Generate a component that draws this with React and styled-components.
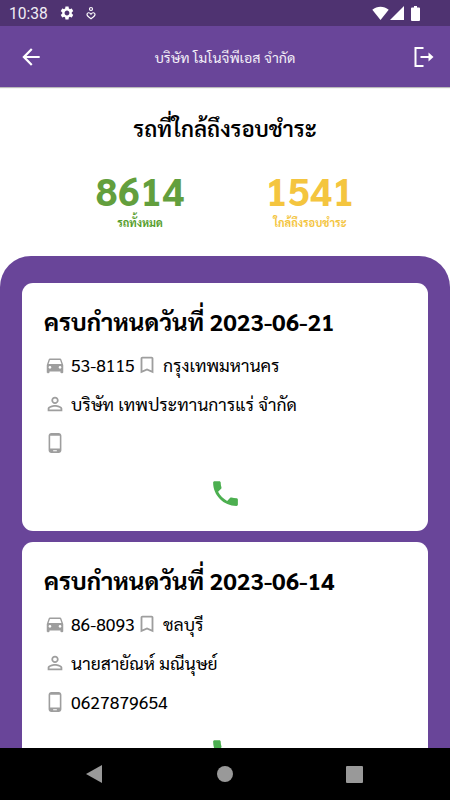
import React from "react";
import styled, { createGlobalStyle } from "styled-components";

const Global = createGlobalStyle`
  *{box-sizing:border-box}
  body{margin:0;background:#fff;overflow:hidden}
`;
const Screen = styled.div`
  width:450px;height:800px;display:flex;flex-direction:column;overflow:hidden;
  font-family:Sarabun,"Noto Sans Thai Looped",sans-serif;color:#000;background:#fff;
`;
const StatusBar = styled.div`
  height:26px;flex:none;background:#4f3371;color:#f1edf5;display:flex;align-items:center;
  padding:0 30px 0 9px;
`;
const Clock = styled.span`font:400 15.6px/24px Roboto,sans-serif;width:50px;padding-top:2px;`;
const Icon = styled.svg`
  display:block;flex:none;width:${p => p.$w}px;height:${p => p.$h || p.$w}px;
  margin-left:${p => p.$ml || 0}px;fill:${p => p.$c || "#fff"};
`;
const Spacer = styled.div`flex:1;`;
const AppBar = styled.header`
  height:61px;flex:none;background:#694599;display:grid;grid-template-columns:26px 1fr 26px;align-items:center;
  justify-items:center;padding:0 14px 0 18px;color:#f4f0f8;box-shadow:0 1px 1px #0004;
`;
const BarTitle = styled.h1`margin:0;font-size:14.2px;font-weight:400;line-height:30px;padding-right:4px;`;
const Line = styled.div`
  font-size:${p => p.$size}px;font-weight:${p => p.$weight || 400};
  line-height:${p => p.$lh}px;height:${p => p.$lh}px;white-space:nowrap;color:${p => p.$c || "inherit"};
`;
const Summary = styled.section`
  height:169px;flex:none;display:flex;flex-direction:column;align-items:center;padding-top:25px;
`;
const Stats = styled.div`
  display:grid;grid-template-columns:170px 170px;width:340px;margin-top:22px;
`;
const Stat = styled.div`display:flex;flex-direction:column;align-items:center;`;
const Panel = styled.main`
  flex:1;min-height:0;overflow:hidden;background:#694599;border-radius:31px 31px 0 0;
  padding:27px 22px 0;display:flex;flex-direction:column;gap:11px;
`;
const Card = styled.article`
  height:248px;flex:none;background:#fff;border-radius:11px;padding:18px 22px 0;
  display:flex;flex-direction:column;
`;
const Rows = styled.div`display:flex;flex-direction:column;margin-top:4px;`;
const Row = styled.div`height:39px;display:flex;align-items:center;`;
const Glyph = styled.div`width:27px;flex:none;display:flex;`;
const Plate = styled.div`width:65px;`;
const Call = styled.div`display:flex;justify-content:center;margin-top:15px;`;
const NavBar = styled.nav`
  height:52px;flex:none;background:#000;display:grid;grid-template-columns:130px 130px 130px;
  justify-content:center;align-items:center;justify-items:center;
`;

const paths = {
  car: "M18.92 6.01C18.72 5.42 18.16 5 17.5 5h-11c-.66 0-1.21.42-1.42 1.01L3 12v8c0 .55.45 1 1 1h1c.55 0 1-.45 1-1v-1h12v1c0 .55.45 1 1 1h1c.55 0 1-.45 1-1v-8l-2.08-5.99zM6.5 16c-.83 0-1.5-.67-1.5-1.5S5.67 13 6.5 13s1.5.67 1.5 1.5S7.33 16 6.5 16zm11 0c-.83 0-1.5-.67-1.5-1.5s.67-1.5 1.5-1.5 1.5.67 1.5 1.5-.67 1.5-1.5 1.5zM5 11l1.5-4.5h11L19 11H5z",
  bookmark: "M17 3H7c-1.1 0-1.99.9-1.99 2L5 21l7-3 7 3V5c0-1.1-.9-2-2-2zm0 15-5-2.18L7 18V5h10v13z",
  person: "M12 5.9a2.1 2.1 0 1 1 0 4.2 2.1 2.1 0 0 1 0-4.2m0 9c2.97 0 6.1 1.46 6.1 2.1v1.1H5.9V17c0-.64 3.13-2.1 6.1-2.1M12 4C9.79 4 8 5.79 8 8s1.79 4 4 4 4-1.79 4-4-1.79-4-4-4zm0 9c-2.67 0-8 1.34-8 4v3h16v-3c0-2.66-5.33-4-8-4z",
  mobile: "M16 1H8C6.34 1 5 2.34 5 4v16c0 1.66 1.34 3 3 3h8c1.66 0 3-1.34 3-3V4c0-1.66-1.34-3-3-3zm-2 20h-4v-1h4v1zm3.25-3H6.75V4h10.5v14z",
  phone: "M6.62 10.79c1.44 2.83 3.76 5.14 6.59 6.59l2.2-2.2c.27-.27.67-.36 1.02-.24 1.12.37 2.33.57 3.57.57.55 0 1 .45 1 1V20c0 .55-.45 1-1 1-9.39 0-17-7.61-17-17 0-.55.45-1 1-1h3.5c.55 0 1 .45 1 1 0 1.25.2 2.45.57 3.57.11.35.03.74-.25 1.02l-2.2 2.2z",
  back: "M20 11H7.83l5.59-5.59L12 4l-8 8 8 8 1.41-1.41L7.83 13H20v-2z",
  gear: "M19.14 12.94c.04-.3.06-.61.06-.94 0-.32-.02-.64-.07-.94l2.03-1.58c.18-.14.23-.41.12-.61l-1.92-3.32c-.12-.22-.37-.29-.59-.22l-2.39.96c-.5-.38-1.03-.7-1.62-.94l-.36-2.54c-.04-.24-.24-.41-.48-.41h-3.84c-.24 0-.43.17-.47.41l-.36 2.54c-.59.24-1.13.57-1.62.94l-2.39-.96c-.22-.08-.47 0-.59.22L2.74 8.87c-.12.21-.08.47.12.61l2.03 1.58c-.05.3-.09.63-.09.94s.02.64.07.94l-2.03 1.58c-.18.14-.23.41-.12.61l1.92 3.32c.12.22.37.29.59.22l2.39-.96c.5.38 1.03.7 1.62.94l.36 2.54c.05.24.24.41.48.41h3.84c.24 0 .44-.17.47-.41l.36-2.54c.59-.24 1.13-.56 1.62-.94l2.39.96c.22.08.47 0 .59-.22l1.92-3.32c.12-.22.07-.47-.12-.61l-2.01-1.58zM12 15.6c-1.98 0-3.6-1.62-3.6-3.6s1.62-3.6 3.6-3.6 3.6 1.62 3.6 3.6-1.62 3.6-3.6 3.6z",
};
const Pic = ({ name, w = 22, c = "#9e9e9e" }) => (
  <Icon viewBox="0 0 24 24" $w={w} $c={c}><path d={paths[name]} /></Icon>
);

const cars = [
  { date: "2023-06-21", plate: "53-8115", city: "กรุงเทพมหานคร", owner: "บริษัท เทพประทานการแร่ จำกัด", tel: "" },
  { date: "2023-06-14", plate: "86-8093", city: "ชลบุรี", owner: "นายสายัณห์ มณีนุษย์", tel: "0627879654" },
];

const CarCard = ({ car }) => (
  <Card>
    <Line $size={24.05} $weight={700} $lh={40}>ครบกำหนดวันที่ {car.date}</Line>
    <Rows>
      <Row>
        <Glyph><Pic name="car" /></Glyph>
        <Plate><Line $size={17.5} $lh={30}>{car.plate}</Line></Plate>
        <Glyph><Pic name="bookmark" /></Glyph>
        <Line $size={17.5} $lh={30}>{car.city}</Line>
      </Row>
      <Row>
        <Glyph><Pic name="person" /></Glyph>
        <Line $size={17.5} $lh={30}>{car.owner}</Line>
      </Row>
      <Row>
        <Glyph><Pic name="mobile" /></Glyph>
        <Line $size={17.6} $lh={30}>{car.tel}</Line>
      </Row>
    </Rows>
    <Call><Pic name="phone" w={33} c="#4caf50" /></Call>
  </Card>
);

export default function App() {
  return (
    <Screen>
      <Global />
      <StatusBar>
        <Clock>10:38</Clock>
        <Pic name="gear" w={16} c="#fff" />
        <Icon viewBox="0 0 12 14" $w={12} $h={14} $ml={10}>
          <circle cx="6" cy="3" r="1.5" fill="none" stroke="#fff" strokeWidth="1.2" />
          <path d="M6 8.2C4.600 6 2 6.500 2 8.500c0 1.500 2 2.800 4 4.300 2-1.500 4-2.800 4-4.300C10 6.500 7.400 6 6 8.200z" fill="none" stroke="#fff" strokeWidth="1.2" />
        </Icon>
        <Spacer />
        <Icon viewBox="0 0 17 14" $w={17} $h={14}><path d="M.3 3.8C5-.4 12-.4 16.7 3.8L8.5 14z" /></Icon>
        <Icon viewBox="0 0 14 14" $w={14} $h={14} $ml={1}><path d="M14 0v14H0z" /></Icon>
        <Icon viewBox="0 0 9 15" $w={9} $h={15} $ml={7}><path d="M3 0h3v1.5h2q1 0 1 1V14q0 1-1 1H1q-1 0-1-1V2.500q0-1 1-1h2z" /></Icon>
      </StatusBar>
      <AppBar>
        <Pic name="back" w={26} c="#fff" />
        <BarTitle>บริษัท โมโนจีพีเอส จำกัด</BarTitle>
        <Icon viewBox="0 0 22 22" $w={22} $ml={1}>
          <path d="M10.500 2H2.500v18h8M7.500 11H17" fill="none" stroke="#fff" strokeWidth="2" />
          <path d="M15.500 6.500 20.500 11l-5 4.500z" />
        </Icon>
      </AppBar>
      <Summary>
        <Line $size={22} $weight={600} $lh={32}>รถที่ใกล้ถึงรอบชำระ</Line>
        <Stats>
          <Stat>
            <Line $size={39.3} $weight={700} $lh={48} $c="#639f3d">8614</Line>
            <Line $size={11} $weight={700} $lh={18} $c="#559d2b">รถทั้งหมด</Line>
          </Stat>
          <Stat>
            <Line $size={39.3} $weight={700} $lh={48} $c="#f4c53f">1541</Line>
            <Line $size={11} $weight={700} $lh={18} $c="#f4c53f">ใกล้ถึงรอบชำระ</Line>
          </Stat>
        </Stats>
      </Summary>
      <Panel>{cars.map(c => <CarCard key={c.date} car={c} />)}</Panel>
      <NavBar>
        <Icon viewBox="0 0 18 20" $w={16} $h={18} $ml={-3} $c="#999"><path d="M18 0v20L0 10z" /></Icon>
        <Icon viewBox="0 0 16 16" $w={16} $c="#999"><circle cx="8" cy="8" r="8" /></Icon>
        <Icon viewBox="0 0 16 16" $w={17} $ml={-2} $c="#999"><rect width="16" height="16" rx="1" /></Icon>
      </NavBar>
    </Screen>
  );
}
